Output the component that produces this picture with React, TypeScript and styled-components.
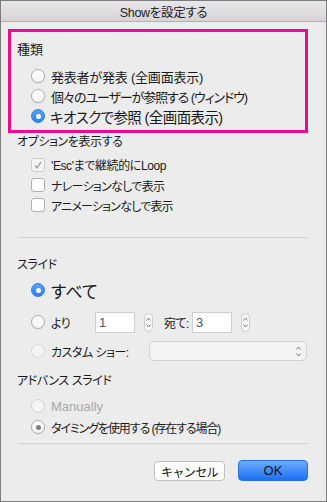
import React from "react";
import styled, { createGlobalStyle, css } from "styled-components";

const Global = createGlobalStyle`
  html, body { margin: 0; padding: 0; background: #ececec; }
  body {
    font-family: "Liberation Sans", "Noto Sans CJK JP", sans-serif;
    font-feature-settings: "palt";
    color: #111;
  }
`;

const Window = styled.div`
  width: 327px;
  height: 502px;
  box-sizing: border-box;
  border: 1px solid #7d7d7d;
  background: #ececec;
  display: flex;
  flex-direction: column;
`;

const TitleBar = styled.div`
  height: 20px;
  flex: none;
  border-bottom: 1px solid #b3b3b3;
  background: linear-gradient(#e9e7e9, #d6d4d6);
  display: flex;
  align-items: center;
  justify-content: center;
  font-size: 12.5px;
  letter-spacing: -0.3px;
  color: #222;
`;

const Content = styled.div`
  display: flex;
  flex-direction: column;
  padding: 0 18px 0 7px;
`;

const Highlight = styled.div`
  margin-top: 7px;
  height: 104px;
  box-sizing: border-box;
  border: 3px solid #ec0a8d;
  padding: 10px 0 0 6px;
  display: flex;
  flex-direction: column;
`;

const Section = styled.div<{ $mt?: number }>`
  padding-left: 9px;
  margin-top: ${(p) => p.$mt ?? 0}px;
  display: flex;
  flex-direction: column;
`;

const Label = styled.div<{ $size?: number; $ls?: number }>`
  height: 16px;
  line-height: 16px;
  font-size: ${(p) => p.$size ?? 12}px;
  letter-spacing: ${(p) => p.$ls ?? -0.4}px;
  color: #1a1a1a;
`;

const List = styled.div<{ $mt: number }>`
  margin-top: ${(p) => p.$mt}px;
  padding-left: 14px;
  display: flex;
  flex-direction: column;
`;

const Row = styled.div<{ $h: number; $size?: number; $ls?: number; $muted?: boolean; $mt?: number }>`
  height: ${(p) => p.$h}px;
  margin-top: ${(p) => p.$mt ?? 0}px;
  display: flex;
  align-items: center;
  font-size: ${(p) => p.$size ?? 12}px;
  letter-spacing: ${(p) => p.$ls ?? 0}px;
  color: ${(p) => (p.$muted ? "#a9a9a9" : "#1a1a1a")};
  white-space: nowrap;
`;

const Caption = styled.span<{ $w?: number; $ml?: number }>`
  display: inline-block;
  margin-left: ${(p) => p.$ml ?? 6}px;
  width: ${(p) => (p.$w ? `${p.$w}px` : "auto")};
`;

type RadioKind = "off" | "on" | "disabled" | "inactive";

const RadioCircle = styled.span<{ $kind: RadioKind }>`
  flex: none;
  width: 14px;
  height: 14px;
  box-sizing: border-box;
  border-radius: 50%;
  position: relative;
  ${(p) =>
    p.$kind === "on"
      ? css`
          background: linear-gradient(#5aa2fb, #2a7ff5);
          border: 1px solid #2f7ee8;
        `
      : p.$kind === "disabled"
      ? css`
          background: #f4f4f4;
          border: 1px solid #d4d4d4;
        `
      : css`
          background: linear-gradient(#ffffff, #f4f4f4);
          border: 1px solid #adadad;
          box-shadow: 0 0.5px 1px rgba(0, 0, 0, 0.12);
        `}
  &::after {
    content: "";
    display: ${(p) => (p.$kind === "on" || p.$kind === "inactive" ? "block" : "none")};
    position: absolute;
    left: 50%;
    top: 50%;
    width: 5px;
    height: 5px;
    margin: -2.5px 0 0 -2.5px;
    border-radius: 50%;
    background: ${(p) => (p.$kind === "on" ? "#fff" : "#7d7d7d")};
  }
`;

const CheckBox = styled.span<{ $disabled?: boolean }>`
  flex: none;
  width: 14px;
  height: 14px;
  box-sizing: border-box;
  border-radius: 3px;
  border: 1px solid ${(p) => (p.$disabled ? "#cdcdcd" : "#b0b0b0")};
  background: ${(p) => (p.$disabled ? "#f4f4f4" : "#fff")};
  display: flex;
  align-items: center;
  justify-content: center;
`;

const Separator = styled.div<{ $mt: number }>`
  margin: ${(p) => p.$mt}px 0 0 10px;
  height: 1px;
  background: #d3d3d3;
`;

const NumInput = styled.span<{ $ml: number }>`
  flex: none;
  margin-left: ${(p) => p.$ml}px;
  width: 40px;
  height: 21px;
  box-sizing: border-box;
  border: 1px solid #cfcfcf;
  background: #fff;
  display: flex;
  align-items: center;
  padding-left: 3px;
  font-size: 13px;
  letter-spacing: 0;
  color: #555;
`;

const Stepper = styled.span<{ $ml: number }>`
  flex: none;
  margin-left: ${(p) => p.$ml}px;
  width: 9px;
  height: 19px;
  box-sizing: border-box;
  border: 1px solid #cdcdcd;
  border-radius: 5px;
  background: #f7f7f7;
  display: flex;
  align-items: center;
  justify-content: center;
`;

const Select = styled.span<{ $ml: number }>`
  flex: none;
  margin-left: ${(p) => p.$ml}px;
  width: 158px;
  height: 20px;
  box-sizing: border-box;
  border: 1px solid #d2d2d2;
  border-radius: 5px;
  background: #f3f3f3;
  display: flex;
  align-items: center;
  justify-content: flex-end;
  padding-right: 5px;
`;

const Buttons = styled.div`
  margin-top: 16px;
  display: flex;
  justify-content: flex-end;
  gap: 13px;
`;

const Button = styled.button<{ $primary?: boolean }>`
  width: ${(p) => (p.$primary ? 70 : 71)}px;
  height: ${(p) => (p.$primary ? 21 : 20)}px;
  margin-top: ${(p) => (p.$primary ? 0 : 1)}px;
  box-sizing: border-box;
  border-radius: 4px;
  font-family: inherit;
  color: #111;
  padding: 0;
  ${(p) =>
    p.$primary
      ? css`
          font-size: 13px;
          border: 1px solid #2c72e6;
          background: linear-gradient(#6aacfc, #1f6ff5);
        `
      : css`
          font-size: 12px;
          letter-spacing: -0.6px;
          border: 1px solid #c0c0c0;
          background: #fff;
        `}
`;

const Chevrons = () => (
  <svg width={5} height={13} viewBox="0 0 5 13" fill="none" stroke="#7a7a7a" strokeWidth="1">
    <path d="M0.5 4.5 L2.5 2 L4.5 4.5" />
    <path d="M0.5 8.5 L2.5 11 L4.5 8.5" />
  </svg>
);

const Check = () => (
  <svg width="10" height="10" viewBox="0 0 10 10" fill="none" stroke="#a3a3a3" strokeWidth="1.4">
    <path d="M2 5.5 L4 7.8 L8 1.8" />
  </svg>
);

export default function App() {
  return (
    <>
      <Global />
      <Window>
        <TitleBar>Showを設定する</TitleBar>
        <Content>
          <Highlight>
            <Label $size={13} $ls={0}>種類</Label>
            <List $mt={8}>
              <Row $h={20} $size={13} $ls={-0.2}>
                <RadioCircle $kind="off" />
                <Caption>発表者が発表 (全画面表示)</Caption>
              </Row>
              <Row $h={20} $size={13} $ls={-1.1}>
                <RadioCircle $kind="off" />
                <Caption>個々のユーザーが参照する (ウィンドウ)</Caption>
              </Row>
              <Row $h={20} $size={14.5} $ls={-0.6}>
                <RadioCircle $kind="on" />
                <Caption $ml={5}>キオスクで参照 (全画面表示)</Caption>
              </Row>
            </List>
          </Highlight>

          <Section $mt={1}>
            <Label>オプションを表示する</Label>
            <List $mt={4}>
              <Row $h={21} $ls={-0.4}>
                <CheckBox $disabled>
                  <Check />
                </CheckBox>
                <Caption>'Esc'まで継続的にLoop</Caption>
              </Row>
              <Row $h={20} $ls={-0.7}>
                <CheckBox />
                <Caption>ナレーションなしで表示</Caption>
              </Row>
              <Row $h={20} $ls={-0.8}>
                <CheckBox />
                <Caption>アニメーションなしで表示</Caption>
              </Row>
            </List>
          </Section>

          <Separator $mt={22} />

          <Section $mt={19}>
            <Label>スライド</Label>
            <List $mt={5}>
              <Row $h={24} $size={17}>
                <RadioCircle $kind="on" />
                <Caption>すべて</Caption>
              </Row>
              <Row $h={24} $mt={8} $ls={-0.5}>
                <RadioCircle $kind="off" />
                <Caption $w={38}>より</Caption>
                <NumInput $ml={6}>1</NumInput>
                <Stepper $ml={9}>
                  <Chevrons />
                </Stepper>
                <Caption $ml={11} $w={28}>宛て:</Caption>
                <NumInput $ml={0}>3</NumInput>
                <Stepper $ml={9}>
                  <Chevrons />
                </Stepper>
              </Row>
              <Row $h={22} $mt={6} $ls={-0.5}>
                <RadioCircle $kind="disabled" />
                <Caption $w={92}>カスタム ショー:</Caption>
                <Select $ml={6}>
                  <Chevrons />
                </Select>
              </Row>
            </List>
          </Section>

          <Section $mt={11}>
            <Label>アドバンス スライド</Label>
            <List $mt={7}>
              <Row $h={20} $size={13} $muted>
                <RadioCircle $kind="disabled" />
                <Caption>Manually</Caption>
              </Row>
              <Row $h={20} $mt={1} $ls={-1.1}>
                <RadioCircle $kind="inactive" />
                <Caption>タイミングを使用する (存在する場合)</Caption>
              </Row>
            </List>
          </Section>

          <Separator $mt={6} />

          <Buttons>
            <Button>キャンセル</Button>
            <Button $primary>OK</Button>
          </Buttons>
        </Content>
      </Window>
    </>
  );
}
